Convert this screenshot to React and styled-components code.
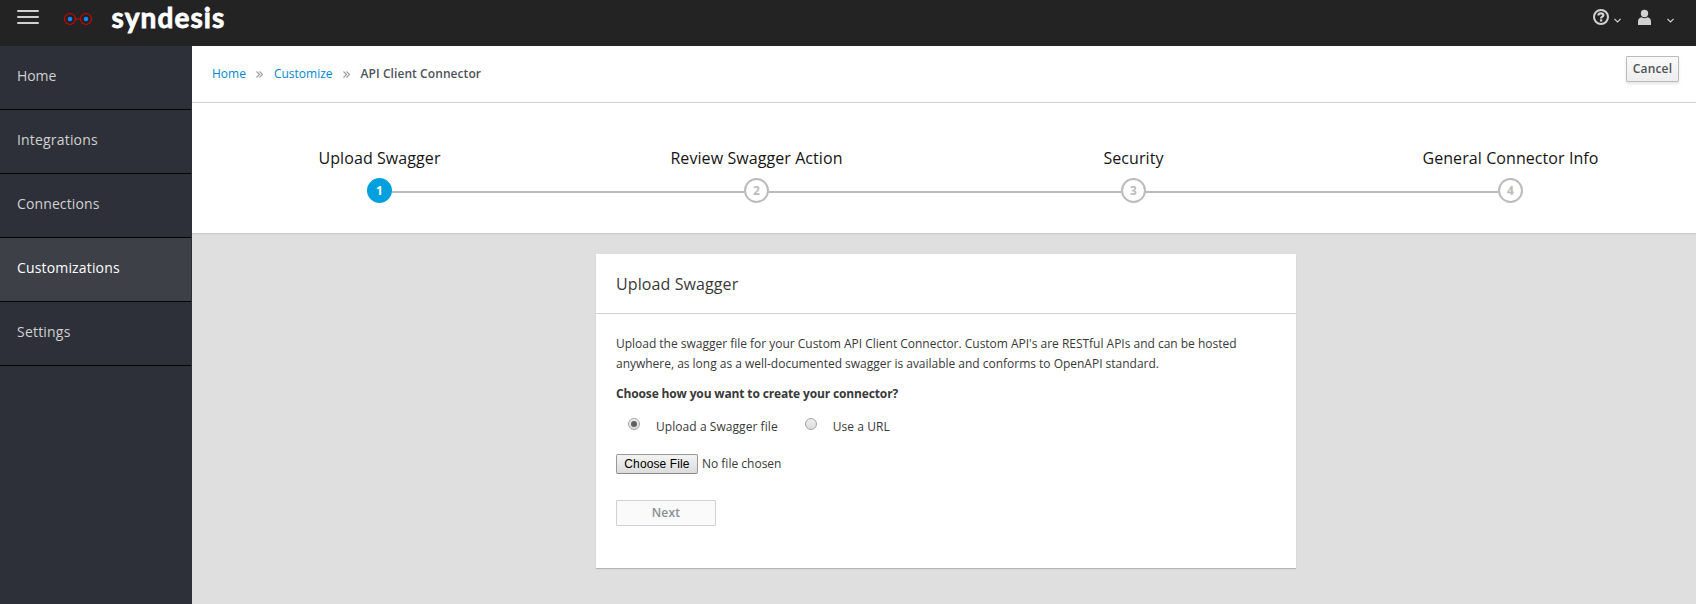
import React from "react";
import styled, { createGlobalStyle } from "styled-components";

const GlobalStyle = createGlobalStyle`
  *, *::before, *::after { box-sizing: border-box; }
  body {
    margin: 0;
    font-family: "Open Sans", "Noto Sans", sans-serif;
    font-size: 12px;
    line-height: 20px;
    color: #393939;
    background: #dfdfdf;
    overflow: hidden;
  }
`;

const Page = styled.div`
  display: flex;
  flex-direction: column;
  height: 100vh;
`;

const Masthead = styled.header`
  display: flex;
  align-items: flex-start;
  height: 46px;
  flex: none;
  background: #232323;
`;

const MenuButton = styled.button`
  display: flex;
  flex-direction: column;
  gap: 4px;
  width: 22px;
  margin: 10px 0 0 17px;
  padding: 0;
  border: 0;
  background: none;
`;

const MenuBar = styled.span`
  height: 2px;
  width: 22px;
  border-radius: 1px;
  background: #d1d1d1;
`;

const Glasses = styled.svg`
  margin: 12px 0 0 24px;
  width: 30px;
  height: 14px;
`;

const Brand = styled.span`
  margin: 0 0 0 18.5px;
  font-family: Lato, sans-serif;
  font-weight: 700;
  font-size: 28px;
  line-height: 34px;
  letter-spacing: 1.1px;
  color: #fff;
  -webkit-text-stroke: 0.8px #fff;
`;

const Tools = styled.div`
  display: flex;
  align-items: flex-start;
  margin-left: auto;
  padding: 9px 22px 0 0;
`;

const ToolGroup = styled.div`
  display: flex;
  margin-left: ${(p) => p.$before}px;
`;

const Chevron = styled.svg`
  width: 7px;
  height: 5px;
  margin: 9px 0 0 ${(p) => p.$gap}px;
`;

const Content = styled.div`
  display: flex;
  flex: 1;
  min-height: 0;
`;

const Sidebar = styled.nav`
  width: 192px;
  flex: none;
  padding-right: 1px;
  background: #2d3038;
`;

const NavItem = styled.a`
  display: flex;
  align-items: center;
  height: 64px;
  padding: 0 17px 4px;
  border-bottom: 1px solid #050505;
  font-size: 14px;
  letter-spacing: ${(p) => p.$tracking}px;
  color: ${(p) => (p.$active ? "#fff" : "#d1d1d1")};
  background: ${(p) => (p.$active ? "#3d4147" : "transparent")};
`;

const Main = styled.main`
  flex: 1;
  min-width: 0;
`;

const TopBar = styled.div`
  display: flex;
  justify-content: space-between;
  height: 57px;
  padding: 10px 17px 0 20px;
  border-bottom: 1px solid #d1d1d1;
  background: #fff;
`;

const Breadcrumb = styled.div`
  display: flex;
  align-items: center;
  height: 36px;
`;

const Crumb = styled.a`
  color: #0088ce;
`;

const CurrentCrumb = styled.span`
  font-weight: 600;
  letter-spacing: 0.07px;
  color: #4d5258;
`;

const Separator = styled.svg`
  width: 7px;
  height: 7px;
  margin: 1px ${(p) => p.$after}px 0 10px;
`;

const CancelButton = styled.button`
  width: 53px;
  height: 26px;
  padding: 0;
  border: 1px solid #bbb;
  border-radius: 1px;
  background: linear-gradient(#fafafa, #ededed);
  box-shadow: 0 2px 3px rgba(3, 3, 3, 0.1);
  font: 600 12px/20px "Open Sans", sans-serif;
  letter-spacing: 0.15px;
  color: #4d5258;
`;

const StepsBar = styled.div`
  height: 131px;
  overflow: hidden;
  border-bottom: 1px solid #cbcbcb;
  background: #fff;
  box-shadow: 0 1px 0 #d7d7d7;
`;

const StepList = styled.ol`
  display: flex;
  width: 1508px;
  margin: 0 0 0 -1px;
  padding: 42px 0 0;
  list-style: none;
`;

const StepItem = styled.li`
  display: flex;
  flex: 1;
  flex-direction: column;
  align-items: center;
`;

const StepTitle = styled.span`
  font-size: 16px;
  line-height: 26px;
  letter-spacing: 0.08px;
  color: #151515;
`;

const StepTrack = styled.div`
  display: flex;
  align-items: flex-start;
  width: 100%;
  margin-top: 7px;
`;

const StepLine = styled.span`
  flex: 1;
  height: 2px;
  margin-top: 13px;
  background: ${(p) => (p.$hidden ? "transparent" : "#bbb")};
`;

const StepNumber = styled.span`
  display: flex;
  align-items: center;
  justify-content: center;
  width: 25px;
  height: 25px;
  border: 2px solid ${(p) => (p.$active ? "#00a0df" : "#bbb")};
  border-radius: 50%;
  font-weight: 700;
  line-height: 21px;
  color: ${(p) => (p.$active ? "#fff" : "#bbb")};
  background: ${(p) => (p.$active ? "#00a0df" : "#fff")};
`;

const Card = styled.section`
  width: 700px;
  height: 314px;
  margin: 20px auto 0 404px;
  background: #fff;
  box-shadow: 0 1px 1px rgba(3, 3, 3, 0.2);
`;

const CardTitle = styled.h2`
  margin: 0;
  height: 60px;
  padding: 20px 20px 0;
  border-bottom: 1px solid #d1d1d1;
  font-size: 16px;
  font-weight: 400;
  line-height: 20px;
  letter-spacing: 0.1px;
`;

const CardBody = styled.form`
  padding: 20px;
`;

const Paragraph = styled.p`
  margin: 0 0 10px;
  letter-spacing: -0.015px;
`;

const Question = styled.strong`
  display: block;
  font-weight: 700;
  letter-spacing: -0.145px;
`;

const RadioRow = styled.div`
  display: flex;
  gap: 27px;
  padding: 13px 0 0 12px;
`;

const RadioLabel = styled.label`
  display: flex;
  align-items: flex-start;
  gap: 16px;
  letter-spacing: 0.06px;
`;

const Radio = styled.span`
  display: flex;
  align-items: center;
  justify-content: center;
  width: 12px;
  height: 12px;
  margin-top: 1px;
  border: 1px solid #a5a5a5;
  border-radius: 50%;
  background: linear-gradient(#eee, #dcdcdc);
`;

const RadioDot = styled.span`
  width: 6px;
  height: 6px;
  border-radius: 50%;
  background: #606060;
`;

const FileRow = styled.div`
  display: flex;
  align-items: center;
  gap: 4px;
  margin-top: 17px;
`;

const FileButton = styled.button`
  width: 82px;
  height: 20px;
  padding: 0;
  border: 1px solid #999;
  border-bottom-color: #888;
  border-radius: 2px;
  background: linear-gradient(#f4f4f4, #dcdcdc);
  font: 12px/16px "Liberation Sans", Arial, sans-serif;
  letter-spacing: 0.12px;
  white-space: nowrap;
  color: #000;
`;

const NextButton = styled.button`
  width: 100px;
  height: 26px;
  margin-top: 26px;
  padding: 0;
  border: 1px solid #d1d1d1;
  border-radius: 1px;
  background: #fafafa;
  font: 600 12px/20px "Open Sans", sans-serif;
  letter-spacing: 0.2px;
  color: #8b8d8f;
`;

const NAV = [
  { label: "Home", tracking: -0.1 },
  { label: "Integrations", tracking: 0.18 },
  { label: "Connections", tracking: 0.12 },
  { label: "Customizations", tracking: 0.16 },
  { label: "Settings", tracking: 0.2 },
];
const STEPS = ["Upload Swagger", "Review Swagger Action", "Security", "General Connector Info"];

function Caret({ gap }) {
  return (
    <Chevron $gap={gap} viewBox="0 0 7 5" fill="none" stroke="#d1d1d1" strokeWidth="1.2">
      <path d="M.4.8 3.5 3.9 6.6.8" />
    </Chevron>
  );
}

function CrumbSeparator() {
  return (
    <Separator $after={11} viewBox="0 0 7 7" fill="none" stroke="#9c9c9c" strokeWidth="1.1">
      <path d="M.5.5l3 3-3 3M3.5.5l3 3-3 3" />
    </Separator>
  );
}

export default function App() {
  return (
    <Page>
      <GlobalStyle />
      <Masthead>
        <MenuButton aria-label="Menu">
          <MenuBar />
          <MenuBar />
          <MenuBar />
        </MenuButton>
        <Glasses viewBox="0 0 30 14" fill="none">
          <g stroke="#d40000" strokeWidth="1.2">
            <circle cx="7" cy="7" r="5.5" />
            <circle cx="23" cy="7" r="5.5" />
            <path d="M12.5 7h5" />
          </g>
          <circle cx="7" cy="7" r="2.3" fill="#0a8cff" />
          <circle cx="23" cy="7" r="2.3" fill="#0a8cff" />
        </Glasses>
        <Brand>syndesis</Brand>
        <Tools>
          <ToolGroup $before={0}>
            <svg width="16" height="16" viewBox="0 0 16 16" fill="none" stroke="#d1d1d1">
              <circle cx="8" cy="8" r="7" strokeWidth="2" />
              <path d="M5.4 6.5C5.5 4.9 6.6 4.4 8 4.4c1.4 0 2.4.7 2.4 1.8C10.4 7.7 8.1 7.7 8.1 9.4" strokeWidth="2.2" />
              <path d="M8.1 10.3v2.2" strokeWidth="2.3" />
            </svg>
            <Caret gap={5} />
          </ToolGroup>
          <ToolGroup $before={17}>
            <svg width="13" height="16" viewBox="0 0 13 16" fill="#d1d1d1">
              <circle cx="6.5" cy="4.5" r="3.7" />
              <path d="M0 16v-3.5C0 10 1.6 8.5 3.5 8.3c1.8 1.2 4.2 1.2 6 0C11.4 8.5 13 10 13 12.5V16z" />
            </svg>
            <Caret gap={16} />
          </ToolGroup>
        </Tools>
      </Masthead>
      <Content>
        <Sidebar>
          {NAV.map(({ label, tracking }) => (
            <NavItem key={label} $active={label === "Customizations"} $tracking={tracking}>
              {label}
            </NavItem>
          ))}
        </Sidebar>
        <Main>
          <TopBar>
            <Breadcrumb>
              <Crumb>Home</Crumb>
              <CrumbSeparator />
              <Crumb>Customize</Crumb>
              <CrumbSeparator />
              <CurrentCrumb>API Client Connector</CurrentCrumb>
            </Breadcrumb>
            <CancelButton>Cancel</CancelButton>
          </TopBar>
          <StepsBar>
            <StepList>
              {STEPS.map((title, i) => (
                <StepItem key={title}>
                  <StepTitle>{title}</StepTitle>
                  <StepTrack>
                    <StepLine $hidden={i === 0} />
                    <StepNumber $active={i === 0}>{i + 1}</StepNumber>
                    <StepLine $hidden={i === STEPS.length - 1} />
                  </StepTrack>
                </StepItem>
              ))}
            </StepList>
          </StepsBar>
          <Card>
            <CardTitle>Upload Swagger</CardTitle>
            <CardBody>
              <Paragraph>
                Upload the swagger file for your Custom API Client Connector. Custom API's are RESTful APIs and can be
                hosted anywhere, as long as a well-documented swagger is available and conforms to OpenAPI standard.
              </Paragraph>
              <Question>Choose how you want to create your connector?</Question>
              <RadioRow>
                <RadioLabel>
                  <Radio>
                    <RadioDot />
                  </Radio>
                  Upload a Swagger file
                </RadioLabel>
                <RadioLabel>
                  <Radio />
                  Use a URL
                </RadioLabel>
              </RadioRow>
              <FileRow>
                <FileButton type="button">Choose File</FileButton>
                <span>No file chosen</span>
              </FileRow>
              <NextButton type="button" disabled>
                Next
              </NextButton>
            </CardBody>
          </Card>
        </Main>
      </Content>
    </Page>
  );
}
